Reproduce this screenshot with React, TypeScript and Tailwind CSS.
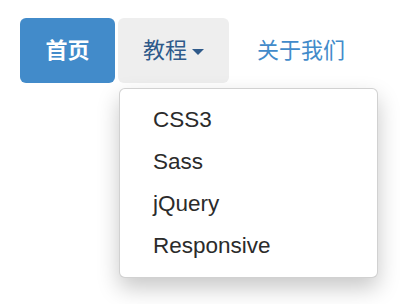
import React from 'react';

const items = ['CSS3', 'Sass', 'jQuery', 'Responsive'];

const App: React.FC = () => {
  return (
    <div
      className="min-h-[304px] w-[415px] bg-white pl-[20px] pt-[18px]"
      style={{ fontFamily: '"Liberation Sans", "Noto Sans CJK SC", sans-serif' }}
    >
      <ul className="flex gap-[3px] text-[22px]">
        <li>
          <a className="flex h-[65px] w-[95px] items-center justify-center rounded-[6px] bg-[#428bca] font-bold text-white">
            首页
          </a>
        </li>
        <li className="relative">
          <a className="flex h-[65px] w-[111px] items-center justify-center gap-[5px] rounded-[6px] bg-[#eeeeee] text-[#2f5a8a]">
            教程
            <span className="mt-[2px] h-0 w-0 border-x-[6px] border-t-[6px] border-x-transparent border-t-[#2f5a8a]" />
          </a>
          <ul className="absolute left-[1px] top-[70px] z-10 w-[259px] rounded-[6px] border border-[rgba(0,0,0,0.18)] bg-white py-[10px] shadow-[0_10px_22px_rgba(0,0,0,0.22)]">
            {items.map((item) => (
              <li key={item} className="pl-[33px] text-[22.5px] leading-[42px] text-[#2b2b2b]">
                {item}
              </li>
            ))}
          </ul>
        </li>
        <li>
          <a className="flex h-[65px] items-center px-[25px] text-[#428bca]">关于我们</a>
        </li>
      </ul>
    </div>
  );
};

export default App;
